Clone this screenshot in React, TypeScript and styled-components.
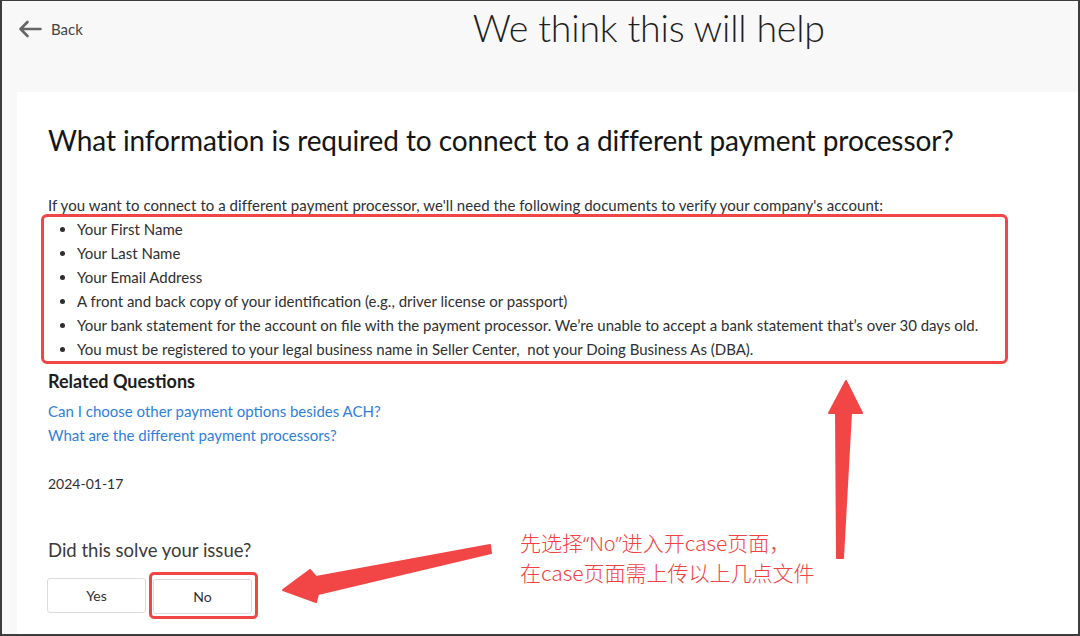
import React from "react";
import styled, { createGlobalStyle } from "styled-components";

const GlobalStyle = createGlobalStyle`
  html, body { margin: 0; padding: 0; background: #ffffff; }
  body { font-family: Lato, "Open Sans", Arial, sans-serif; color: #2e2f32; }
  * { box-sizing: border-box; }
`;

const Frame = styled.div`
  position: relative;
  width: 1080px;
  height: 636px;
  border: 2px solid #3d3d3d;
  border-top-width: 1px;
  background: #f8f8f8;
  display: flex;
  flex-direction: column;
  overflow: hidden;
`;

const Header = styled.header`
  height: 91px;
  display: flex;
  align-items: flex-start;
  padding-left: 16px;
`;

const BackLink = styled.a`
  display: flex;
  align-items: center;
  gap: 9px;
  margin-top: 19px;
  color: #454545;
  font-size: 15px;
  text-decoration: none;
  cursor: pointer;
`;

const PageTitle = styled.h1`
  margin: 5px 0 0 390px;
  font-size: 37.5px;
  line-height: 44px;
  font-weight: 300;
  color: #1f1f1f;
  letter-spacing: -0.2px;
`;

const Card = styled.main`
  flex: 1;
  margin-left: 15px;
  background: #ffffff;
  padding: 31px 30px 0 31px;
  display: flex;
  flex-direction: column;
  align-items: flex-start;
`;

const Question = styled.h2`
  margin: 0;
  font-size: 28px;
  line-height: 34px;
  font-weight: 400;
  color: #151515;
  letter-spacing: -0.1px;
`;

const Intro = styled.p`
  margin: 36px 0 0;
  font-size: 15px;
  line-height: 24px;
  color: #2e2f32;
  letter-spacing: 0.05px;
`;

const HighlightList = styled.ul`
  margin: -3px 0 0 -7px;
  width: 967px;
  padding: 0 0 0 33px;
  border: 3px solid #f24646;
  border-radius: 6px;
  list-style: disc;
`;

const Item = styled.li`
  font-size: 15px;
  line-height: 24px;
  color: #2e2f32;
`;

const SectionTitle = styled.h3`
  margin: 5px 0 0;
  font-size: 18px;
  line-height: 24px;
  font-weight: 700;
  color: #1d1d1d;
`;

const LinkList = styled.div`
  margin-top: 6px;
  display: flex;
  flex-direction: column;
`;

const RelatedLink = styled.a`
  font-size: 15px;
  line-height: 24px;
  color: #2f80dd;
  text-decoration: none;
  cursor: pointer;
`;

const DateText = styled.div`
  margin-top: 25px;
  font-size: 14px;
  line-height: 24px;
  color: #2e2f32;
`;

const Prompt = styled.div`
  margin-top: 42px;
  font-size: 18.5px;
  line-height: 24px;
  color: #3a3a3a;
`;

const ButtonRow = styled.div`
  margin: 10px 0 0 -1px;
  display: flex;
  align-items: center;
  gap: 3px;
`;

const Choice = styled.button`
  width: 99px;
  height: 35px;
  border: 1px solid #dcdcdc;
  border-radius: 3px;
  background: #ffffff;
  font-family: Lato, Arial, sans-serif;
  font-size: 14px;
  color: #2e2f32;
  cursor: pointer;
`;

const Marked = styled.div`
  border: 3px solid #f24646;
  border-radius: 5px;
  padding: 4px 3px 2px 1px;
  display: flex;
`;

const Overlay = styled.svg`
  position: absolute;
  left: -2px;
  top: -1px;
  width: 1080px;
  height: 636px;
  pointer-events: none;
`;

const Note = styled.div`
  position: absolute;
  left: 518px;
  top: 527px;
  font-family: "Noto Sans CJK SC", "Noto Sans", sans-serif;
  font-size: 21px;
  line-height: 29px;
  font-weight: 300;
  color: #f24141;
  white-space: nowrap;
`;

const Quote = styled.span`
  font-family: "Noto Sans", Arial, sans-serif;
  font-weight: 300;
  font-size: 20px;
`;

const BackArrow = () => (
  <svg width="24" height="18" viewBox="0 0 24 18" fill="none">
    <path d="M22.5 9H2.5M9.5 2L2.5 9l7 7" stroke="#666" strokeWidth="2.6" strokeLinecap="round" strokeLinejoin="round" />
  </svg>
);

const items = [
  "Your First Name",
  "Your Last Name",
  "Your Email Address",
  "A front and back copy of your identification (e.g., driver license or passport)",
  "Your bank statement for the account on file with the payment processor. We\u2019re unable to accept a bank statement that\u2019s over 30 days old.",
  "You must be registered to your legal business name in Seller Center,\u00a0 not your Doing Business As (DBA).",
];

export default function App() {
  return (
    <>
      <GlobalStyle />
      <Frame>
        <Header>
          <BackLink>
            <BackArrow />
            Back
          </BackLink>
          <PageTitle>We think this will help</PageTitle>
        </Header>
        <Card>
          <Question>What information is required to connect to a different payment processor?</Question>
          <Intro>
            If you want to connect to a different payment processor, we'll need the following documents to verify your company's account:
          </Intro>
          <HighlightList>
            {items.map((t) => (
              <Item key={t}>{t}</Item>
            ))}
          </HighlightList>
          <SectionTitle>Related Questions</SectionTitle>
          <LinkList>
            <RelatedLink>Can I choose other payment options besides ACH?</RelatedLink>
            <RelatedLink>What are the different payment processors?</RelatedLink>
          </LinkList>
          <DateText>2024-01-17</DateText>
          <Prompt>Did this solve your issue?</Prompt>
          <ButtonRow>
            <Choice>Yes</Choice>
            <Marked>
              <Choice>No</Choice>
            </Marked>
          </ButtonRow>
        </Card>
        <Overlay viewBox="0 0 1080 636">
          <polygon
            points="846,381 862,413 851,413 843,558 837,558 836,413 829,413"
            fill="#f24646"
            stroke="#f24646"
            strokeWidth="2"
            strokeLinejoin="round"
          />
          <polygon
            points="283,590 310,570 316,577 490,545 491,553 318,594 316,602"
            fill="#f24646"
            stroke="#f24646"
            strokeWidth="2"
            strokeLinejoin="round"
          />
        </Overlay>
        <Note>
          先选择<Quote>“No”</Quote>进入开case页面，
          <br />
          在case页面需上传以上几点文件
        </Note>
      </Frame>
    </>
  );
}
